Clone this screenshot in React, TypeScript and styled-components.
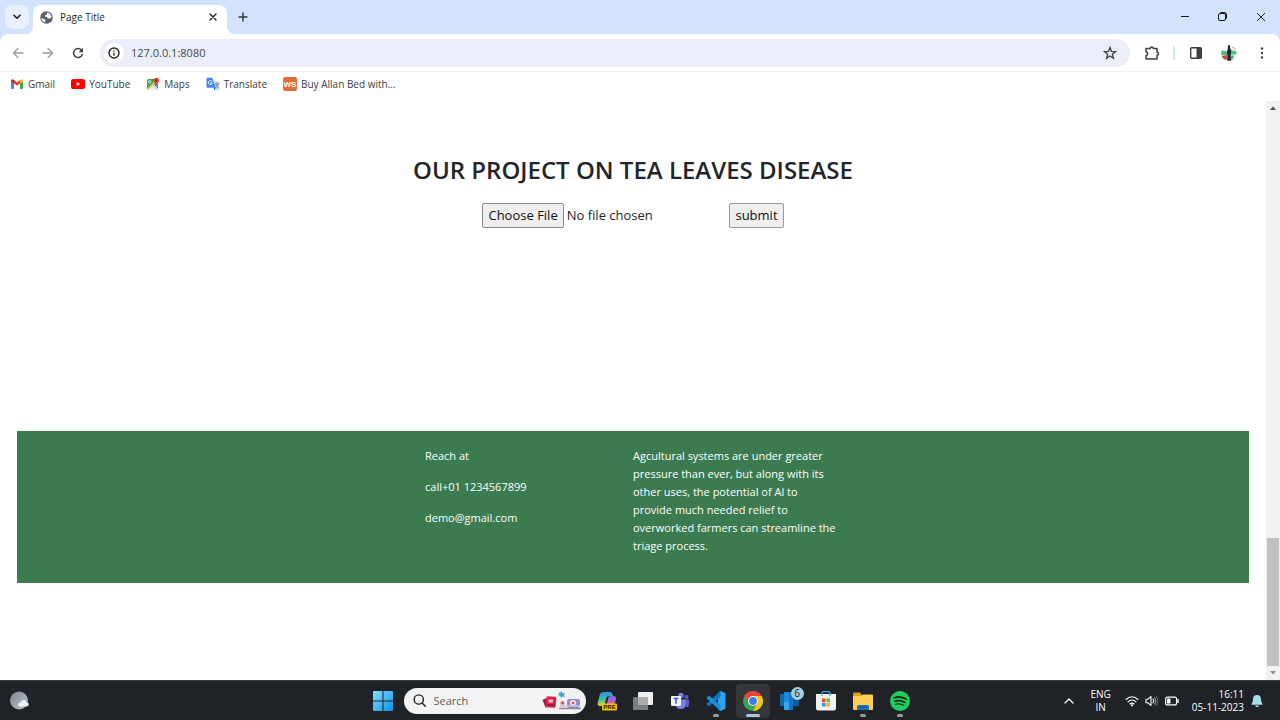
import React from 'react';
import styled, { createGlobalStyle } from 'styled-components';

const GlobalStyle = createGlobalStyle`
  *, *::before, *::after { box-sizing: border-box; }
  body { margin: 0; background: #ffffff; font-family: 'Open Sans', 'Noto Sans', sans-serif; }
  button, input { font-family: inherit; }
  svg { display: block; flex: none; }
`;

const Desktop = styled.div`
  min-height: 100vh;
  display: flex;
  flex-direction: column;
`;

/* ---------- browser frame ---------- */

const IconButton = styled.button<{ $size?: number; $bg?: string; $radius?: number }>`
  width: ${(p) => p.$size ?? 24}px;
  height: ${(p) => p.$size ?? 24}px;
  border: 0;
  padding: 0;
  display: flex;
  align-items: center;
  justify-content: center;
  flex: none;
  background: ${(p) => p.$bg ?? 'transparent'};
  border-radius: ${(p) => p.$radius ?? 12}px;
`;

const TabStrip = styled.header`
  display: flex;
  align-items: flex-end;
  height: 34px;
  padding: 0 7px 0 5px;
  background: #d3e2fd;
`;

const StripCell = styled.div`
  display: flex;
  align-items: center;
  height: 34px;
`;

const Tab = styled.div`
  position: relative;
  display: flex;
  align-items: center;
  width: 194px;
  height: 29px;
  margin: 0 4px;
  padding: 0 2px 5px 7px;
  gap: 7px;
  background: #ffffff;
  border-radius: 8px 8px 0 0;
  font-size: 10px;
  color: #1f1f1f;

  &::before,
  &::after {
    content: '';
    position: absolute;
    bottom: 0;
    width: 8px;
    height: 8px;
  }
  &::before {
    right: 100%;
    background: radial-gradient(circle at 0 0, transparent 8px, #ffffff 8px);
  }
  &::after {
    left: 100%;
    background: radial-gradient(circle at 100% 0, transparent 8px, #ffffff 8px);
  }
`;

const TabTitle = styled.span`
  flex: 1;
`;

const WindowControls = styled.div`
  display: flex;
  align-items: center;
  height: 34px;
  gap: 14px;
  margin-left: auto;
`;

const ToolbarBack = styled.div`
  background: #d3e2fd;
`;

const Toolbar = styled.div`
  display: flex;
  align-items: center;
  height: 38px;
  padding: 0 6px;
  background: #ffffff;
  border-bottom: 1px solid #eef0f4;
  border-radius: 8px 8px 0 0;
`;

const NavButtons = styled.div`
  display: flex;
  gap: 6px;
  margin-right: 10px;
`;

const AddressBar = styled.div`
  display: flex;
  align-items: center;
  flex: 1;
  height: 28px;
  padding: 0 8px 0 4px;
  background: #ebeef8;
  border-radius: 14px;
`;

const AddressInput = styled.input`
  flex: 1;
  min-width: 0;
  margin-left: 7px;
  border: 0;
  padding: 0;
  outline: 0;
  background: transparent;
  color: #45474b;
  font-size: 11px;
`;

const ToolbarEnd = styled.div`
  display: flex;
  align-items: center;
  margin-left: 10px;
`;

const Divider = styled.span`
  width: 2px;
  height: 14px;
  margin: 0 9px;
  background: #d3e2fd;
`;

const EndButtons = styled.div`
  display: flex;
  gap: 9px;
`;

const Bookmarks = styled.nav`
  display: flex;
  align-items: center;
  height: 29px;
  padding: 0 10px 5px;
  gap: 16px;
  background: #ffffff;
`;

const Bookmark = styled.a`
  display: flex;
  align-items: center;
  gap: 4px;
  color: #3a3c40;
  font-size: 10px;
  line-height: 16px;
  text-decoration: none;
  white-space: nowrap;
`;

/* ---------- web page ---------- */

const Viewport = styled.div`
  flex: 1;
  display: flex;
`;

const Page = styled.main`
  flex: 1;
  padding: 52px 17px 96px;
  color: #212529;
`;

const Title = styled.h1`
  margin: 0 0 16px;
  font-size: 24px;
  font-weight: 600;
  line-height: 34px;
  text-align: center;
`;

const UploadForm = styled.form`
  display: flex;
  justify-content: center;
  margin-bottom: 203px;
`;

const FileInput = styled.input`
  width: 247px;
  height: 25px;
  font-size: 13px;
  line-height: 23px;
  color: #212529;

  &::file-selector-button {
    height: 25px;
    margin: 0 3px 0 0;
    padding: 0 5px;
    font: inherit;
    color: #111111;
    background: #efefef;
    border: 1px solid #8a8a8a;
    border-radius: 2px;
  }
`;

const SubmitButton = styled.button`
  height: 25px;
  padding: 0 5px;
  font-size: 13px;
  line-height: 23px;
  color: #111111;
  background: #efefef;
  border: 1px solid #9a9a9a;
  border-radius: 2px;
`;

const Footer = styled.footer`
  display: flex;
  justify-content: center;
  min-height: 152px;
  padding: 16px 0 14px;
  background: #3c7a50;
  color: #ffffff;
  font-size: 11px;
  line-height: 18px;
`;

const FooterColumn = styled.div`
  width: 208px;
  padding-right: 3px;

  p {
    margin: 0 0 13px;
  }
`;

const ScrollTrack = styled.div`
  display: flex;
  flex-direction: column;
  align-items: center;
  width: 14px;
  padding: 5px 0;
  background: #f1f1f1;
`;

const ScrollThumb = styled.div`
  width: 12px;
  height: 128px;
  margin: auto 0 4px;
  background: #c1c1c1;
`;

/* ---------- taskbar ---------- */

const Taskbar = styled.footer`
  display: grid;
  grid-template-columns: 1fr auto 1fr;
  align-items: center;
  height: 40px;
  padding: 0 7px 0 9px;
  background: #1f2226;
  border-top: 1px solid #3a3d40;
  color: #ffffff;
`;

const TaskCenter = styled.div`
  display: flex;
  align-items: center;
  gap: 4px;
`;

const SearchBox = styled.label`
  display: flex;
  align-items: center;
  width: 182px;
  height: 26px;
  padding: 0 4px 0 9px;
  gap: 8px;
  background: #f3f3f3;
  border-radius: 13px;
`;

const SearchInput = styled.input`
  flex: 1;
  min-width: 0;
  border: 0;
  padding: 0;
  outline: 0;
  background: transparent;
  font-size: 11px;

  &::placeholder {
    color: #5c5c5c;
  }
`;

const AppRow = styled.div`
  display: flex;
  justify-content: space-between;
  width: 327px;
`;

const AppButton = styled.button<{ $active?: boolean; $running?: boolean }>`
  position: relative;
  display: flex;
  align-items: center;
  justify-content: center;
  width: 34px;
  height: 34px;
  padding: 0;
  border: 0;
  border-radius: 4px;
  background: ${(p) => (p.$active ? '#34373a' : 'transparent')};

  &::after {
    content: '';
    display: ${(p) => (p.$active || p.$running ? 'block' : 'none')};
    position: absolute;
    bottom: 1px;
    left: 50%;
    width: ${(p) => (p.$active ? 14 : 6)}px;
    height: 3px;
    border-radius: 2px;
    transform: translateX(-50%);
    background: ${(p) => (p.$active ? '#a3cbdc' : '#9a9c9e')};
  }
`;

const Badge = styled.span`
  position: absolute;
  top: 3px;
  right: 3px;
  width: 13px;
  height: 13px;
  border-radius: 50%;
  background: #a4cfe2;
  color: #16232b;
  font-size: 10px;
  line-height: 13px;
  text-align: center;
`;

const Tray = styled.div`
  display: flex;
  align-items: center;
  justify-content: flex-end;
  padding-right: 10px;
  font-size: 10px;
  line-height: 13px;
`;

const Language = styled.div`
  margin: 0 14px 0 16px;
  text-align: center;
`;

const TrayIcons = styled.div`
  display: flex;
  align-items: center;
  gap: 6px;
`;

const Clock = styled.div`
  margin: 0 7px 0 13px;
  text-align: right;
`;

/* ---------- icons ---------- */

const line = { fill: 'none', strokeLinecap: 'round' as const, strokeLinejoin: 'round' as const };

const GlobeIcon = () => (
  <svg width="13" height="13" viewBox="0 0 13 13">
    <circle cx="6.5" cy="6.5" r="6.2" fill="#5b6066" />
    <path d="M1.4 7.2 4.8 8.2 5.6 9.6 4.6 11.4C2.8 10.6 1.5 9 1.4 7.2Z" fill="#fff" />
    <path d="M7.2 1.4C9.6 1.8 11.4 3.8 11.6 6.2L9.8 7.6 7.6 7.4 7.2 6 4.8 5.6 5.2 4.2 6.8 3.8Z" fill="#fff" />
  </svg>
);

const GmailIcon = () => (
  <svg width="14" height="14" viewBox="0 0 14 14">
    <path d="M1 4v7.2q0 .8.8.8H4V6.2Z" fill="#4285f4" />
    <path d="M13 4v7.2q0 .8-.8.8H10V6.2Z" fill="#34a853" />
    <path d="M10 6.4V3.2l.7-.6Q12.900 1.600 13 4v.4Z" fill="#fbbc04" />
    <path d="M4 6.400V3L7 5.300 10 3v3.400L7 8.700Z" fill="#ea4335" />
    <path d="M1 4.400V4q.1-2.400 2.300-1.400L4 3.200v3.200Z" fill="#c5221f" />
  </svg>
);

const YouTubeIcon = () => (
  <svg width="14" height="14" viewBox="0 0 14 14">
    <rect x="0" y="2" width="14" height="10" rx="2.600" fill="#f00" />
    <path d="M5.600 4.900v4.200L9.300 7Z" fill="#fff" />
  </svg>
);

const MapsIcon = () => (
  <svg width="14" height="14" viewBox="0 0 14 14">
    <rect x="1" y="2" width="11" height="11" rx="1.500" fill="#34a853" />
    <path d="M2 13 7 8l5 5Z" fill="#e8eaed" />
    <path d="M12 6v6L8 8l2-2Z" fill="#4285f4" />
    <path d="m7.500 7.500 4.500 4.500" stroke="#fff" strokeWidth=".9" />
    <path d="M1.500 12.500 8.500 5.500" stroke="#fbd34b" strokeWidth="1.600" />
    <circle cx="3.700" cy="4.800" r="1.200" fill="none" stroke="#fff" strokeWidth=".8" />
    <path d="M10.300 9C10 6.800 7.600 6 7.600 3.500a2.700 2.700 0 0 1 5.400 0C13 6 10.600 6.800 10.300 9Z" fill="#ea4335" />
    <circle cx="10.300" cy="3.500" r="1" fill="#8c1a11" />
  </svg>
);

const TranslateIcon = () => (
  <svg width="14" height="14" viewBox="0 0 14 14">
    <path d="M5 4h7.500q1 0 1 1v7.500q0 1-1 1H8.500Z" fill="#dadce0" />
    <path d="M7.500 10.500h2L8.500 13.500Z" fill="#174ea6" />
    <path d="M1.500.8h4.800L9.500 10.800h-8q-1 0-1-1v-8q0-1 1-1Z" fill="#4285f4" />
    <path d="M5.900 4.300A2 2 0 1 0 6.300 6H4.600" {...line} stroke="#fff" strokeWidth=".9" />
    <path d="M9 7h3.600M10.800 6.200V7M12 7c-.3 1.700-1.400 3-2.600 3.800M9.800 8.300c.6 1.200 1.500 2 2.600 2.500" {...line} stroke="#5f6f8a" strokeWidth=".8" />
  </svg>
);

const WsIcon = () => (
  <svg width="14" height="14" viewBox="0 0 14 14">
    <rect width="14" height="14" rx="2" fill="#e26b3a" />
    <text x="7" y="10" fontSize="8" fontWeight="700" fill="#fff" textAnchor="middle" fontFamily="Liberation Sans, sans-serif">WS</text>
  </svg>
);

const AvatarIcon = () => (
  <svg width="18" height="18" viewBox="0 0 18 18">
    <circle cx="9" cy="9" r="8" fill="#f3f5f4" />
    <path d="M1.500 6.500 6 7l1 4H1.200ZM11 6.500l5 .5.500 3.500H10Z" fill="#3fc66a" />
    <path d="M1.500 12 7 11v4.500L4 15.500Z" fill="#bc4a3e" />
    <path d="M11 11.500h3L13 15l-2 1Z" fill="#4fae63" />
    <path d="M12 3q3 .5 4 3" fill="none" stroke="#e2a49b" />
    <path d="M8 1.200h2v3l1.200 2-.5 4.500.3 6H7.200l.3-5.500L6.500 9l1.300-4Z" fill="#152536" />
  </svg>
);

const StartIcon = () => (
  <svg width="20" height="20" viewBox="0 0 20 20">
    <defs>
      <linearGradient id="start" x1="0" y1="0" x2="1" y2="1">
        <stop offset="0" stopColor="#7fe3fc" />
        <stop offset="1" stopColor="#0c8ee8" />
      </linearGradient>
    </defs>
    <path d="M1 0h8.500v9.500H0V1q0-1 1-1Zm9.500 0H19q1 0 1 1v8.500h-9.500ZM0 10.500h9.500V20H1q-1 0-1-1Zm10.500 0H20V19q0 1-1 1h-8.500Z" fill="url(#start)" />
  </svg>
);

const SearchArt = () => (
  <svg width="40" height="20" viewBox="0 0 40 20">
    <path d="m.5 9 4-2 2 9-3 .5Z" fill="#a31745" />
    <rect x="4" y="5.500" width="10" height="11" rx="1.500" transform="rotate(5 9 11)" fill="#d9264f" />
    <path d="M6.500 8.500h4.500v3H6.500Z" fill="#f8b7c4" />
    <path d="M5 14h8" stroke="#8d1739" strokeWidth="1.500" />
    <path d="m16 1 2 1 1.500-2 1 2.200L23 2l-1.200 2L23 6l-2.500-.5L19 7l-.8-2.400L16 4.500l1.200-1.700Z" fill="#36a9c9" />
    <path d="M18 11q0-2 2.500-2t2.500 2v5h-5Z" fill="#f3c8cf" />
    <circle cx="20.500" cy="12" r="1.500" fill="#d84557" />
    <rect x="25" y="8" width="13" height="9" rx="2" fill="#8b8fd0" />
    <circle cx="31" cy="12" r="3" fill="#f6dfe5" />
    <circle cx="31" cy="12" r="1.300" fill="#d84557" />
    <path d="M17 17.500h22" stroke="#8f8298" strokeWidth="1.500" />
    <path d="M18 15h20" stroke="#c7c3e5" strokeWidth="1.500" />
  </svg>
);

const CopilotIcon = () => (
  <svg width="20" height="20" viewBox="0 0 20 20">
    <defs>
      <linearGradient id="copilotLeft" x1="0" y1="0" x2="0" y2="1">
        <stop offset="0" stopColor="#2e8be8" />
        <stop offset=".5" stopColor="#39bfa0" />
        <stop offset="1" stopColor="#e8cf3a" />
      </linearGradient>
      <linearGradient id="copilotRight" x1="0" y1="0" x2="0" y2="1">
        <stop offset="0" stopColor="#6b6fe8" />
        <stop offset=".6" stopColor="#d35fc4" />
        <stop offset="1" stopColor="#f07a5c" />
      </linearGradient>
    </defs>
    <path d="M6 1h7q2 0 2.500 2l.5 2h-4q-2 0-2.500 2L8 13q-.5 2-2.500 2H3q-3 0-2.200-3.500l2-8Q3.500 1 6 1Z" fill="url(#copilotLeft)" />
    <path d="M13 5h3.500q3 0 2.500 3l-1.500 6q-.5 2-3 2H8l1-1 2.200-8Q11.500 5 13 5Z" fill="url(#copilotRight)" />
    <path d="M9.500 6.500h2L9.500 13H8Z" fill="#1f2226" />
    <rect x="5" y="12.500" width="15" height="7" rx="1" fill="#f3bd12" />
    <text x="12.500" y="18.300" fontSize="6" fontWeight="700" fill="#2b2200" textAnchor="middle" fontFamily="Liberation Sans, sans-serif">PRE</text>
  </svg>
);

const TaskViewIcon = () => (
  <svg width="20" height="20" viewBox="0 0 20 20">
    <rect x="5" y="1" width="15" height="13" rx="1" fill="#efefef" />
    <rect x="0" y="6" width="15" height="13" rx="1" fill="#7b7d7f" />
    <path d="M5 6h9q1 0 1 1v7H5Z" fill="#acaeaf" />
  </svg>
);

const TeamsIcon = () => (
  <svg width="18" height="18" viewBox="0 0 18 18">
    <circle cx="15.500" cy="5" r="2" fill="#5b61c4" />
    <path d="M12 7.500h6v5q0 2.500-3 2.800Z" fill="#5b61c4" />
    <circle cx="10" cy="3.500" r="2.700" fill="#7b81e2" />
    <path d="M5 7.500h9.500V13q0 4-4.700 4T5 13Z" fill="#7b81e2" />
    <rect x="0" y="4" width="10" height="10" rx="1" fill="#eef0fb" />
    <path d="M2.500 6.500h5M5 6.500v5.200" stroke="#4b53bc" strokeWidth="1.500" />
  </svg>
);

const VsCodeIcon = () => (
  <svg width="20" height="20" viewBox="0 0 20 20">
    <path d="m14.500 0 5 2.300v15.400l-5 2.300-2.500-1.800V2Z" fill="#2ba5ee" />
    <path d="M14.500 0 1 12.300q-.7.700 0 1.400l1.200 1.200q.6.500 1.300 0L14.500 6Z" fill="#0a78be" />
    <path d="M14.500 20 1 7.700Q.3 7 1 6.300l1.200-1.200q.6-.5 1.300 0L14.500 14Z" fill="#1490d8" />
  </svg>
);

const ChromeIcon = () => (
  <svg width="20" height="20" viewBox="0 0 20 20">
    <circle cx="10" cy="10" r="10" fill="#34a853" />
    <path d="M1.340 5A10 10 0 0 1 18.660 5H10a5 5 0 0 0-4.330 7.500Z" fill="#ea4335" />
    <path d="M18.660 5A10 10 0 0 1 10 20l4.330-7.500A5 5 0 0 0 10 5Z" fill="#fbc116" />
    <circle cx="10" cy="10" r="5" fill="#fff" />
    <circle cx="10" cy="10" r="3.900" fill="#3b7ded" />
  </svg>
);

const PhoneLinkIcon = () => (
  <svg width="20" height="20" viewBox="0 0 20 20">
    <path d="M0 3h9v12H0Z" fill="#1169ae" />
    <path d="M9 6h10v9H9Z" fill="#115b96" />
    <path d="M4 1h9v13H4Z" fill="#1b8bdb" />
    <path d="M4 11h9v8H4Z" fill="#35a9ef" />
    <path d="M9 1h4v18H9Z" fill="#1476c2" />
  </svg>
);

const StoreIcon = () => (
  <svg width="20" height="20" viewBox="0 0 20 20">
    <path d="M6 5V2q0-1.500 1.500-1.500h5Q14 .5 14 2v3" fill="none" stroke="#3ba3dc" strokeWidth="1.300" />
    <path d="M0 3h20v14q0 2.500-2.500 2.500h-15Q0 19.500 0 17Z" fill="#f2f2f2" />
    <path d="M6 2.500V5M14 2.500V5" stroke="#3ba3dc" strokeWidth="1.300" />
    <path d="M6 7.500h3.600v3.600H6Z" fill="#e8512b" />
    <path d="M10.400 7.500H14v3.600h-3.600Z" fill="#7bb52d" />
    <path d="M6 11.900h3.600v3.600H6Z" fill="#2e9bdc" />
    <path d="M10.400 11.900H14v3.600h-3.600Z" fill="#f0b420" />
  </svg>
);

const ExplorerIcon = () => (
  <svg width="20" height="20" viewBox="0 0 20 20">
    <path d="M1 1.500h6L9 4h10q1 0 1 1v5H0V2.500q0-1 1-1Z" fill="#dd9c1c" />
    <path d="M0 5h8l2-1.500h9q1 0 1 1V18q0 1-1 1H1q-1 0-1-1Z" fill="#fbcf56" />
    <path d="M4 19v-3.500Q4 14 5.500 14h9q1.500 0 1.500 1.500V19Z" fill="#1873bd" />
    <path d="M6.500 16.500h7" stroke="#0b4f8d" strokeWidth="1.200" />
  </svg>
);

const SpotifyIcon = () => (
  <svg width="20" height="20" viewBox="0 0 20 20">
    <circle cx="10" cy="10" r="10" fill="#1fce5c" />
    <g {...line} stroke="#15301f">
      <path d="M4 6.800c4-1.200 8.500-.8 12 1.200" strokeWidth="1.900" />
      <path d="M4.600 10.200c3.500-1 7.200-.6 10.200 1.100" strokeWidth="1.600" />
      <path d="M5.200 13.300c2.900-.8 5.800-.5 8.400 1" strokeWidth="1.300" />
    </g>
  </svg>
);

const WeatherIcon = () => (
  <svg width="20" height="20" viewBox="0 0 20 20">
    <defs>
      <linearGradient id="moon" x1="0" y1="0" x2="1" y2="1">
        <stop offset="0" stopColor="#7d868f" />
        <stop offset="1" stopColor="#bcc4ca" />
      </linearGradient>
    </defs>
    <circle cx="10" cy="9.500" r="9" fill="url(#moon)" />
    <path d="M12 15.500q-3 0-3-2t2.500-2q1-3 3.800-2.500 2 .3 2.300 2.300 2.400.3 2.200 2.200-.2 2-2.300 2Z" fill="#eef2f5" />
  </svg>
);

const bookmarks = [
  { label: 'Gmail', icon: <GmailIcon /> },
  { label: 'YouTube', icon: <YouTubeIcon /> },
  { label: 'Maps', icon: <MapsIcon /> },
  { label: 'Translate', icon: <TranslateIcon /> },
  { label: 'Buy Allan Bed with...', icon: <WsIcon /> },
];

const apps = [
  { label: 'Copilot', icon: <CopilotIcon /> },
  { label: 'Task view', icon: <TaskViewIcon /> },
  { label: 'Teams', icon: <TeamsIcon /> },
  { label: 'Visual Studio Code', icon: <VsCodeIcon />, running: true },
  { label: 'Google Chrome', icon: <ChromeIcon />, active: true },
  { label: 'Phone Link', icon: <PhoneLinkIcon />, badge: 6 },
  { label: 'Store', icon: <StoreIcon /> },
  { label: 'File Explorer', icon: <ExplorerIcon />, running: true },
  { label: 'Spotify', icon: <SpotifyIcon />, running: true },
];

export default function App() {
  return (
    <Desktop>
      <GlobalStyle />
      <TabStrip>
        <StripCell>
          <IconButton aria-label="Search tabs" $bg="#e8f0fe" $radius={8}>
            <svg width="8" height="6" viewBox="0 0 8 6"><path d="m1 1.200 3 3 3-3" {...line} stroke="#1f1f1f" strokeWidth="1.600" /></svg>
          </IconButton>
        </StripCell>
        <Tab>
          <GlobeIcon />
          <TabTitle>Page Title</TabTitle>
          <IconButton aria-label="Close tab">
            <svg width="8" height="8" viewBox="0 0 8 8"><path d="m1 1 6 6M7 1 1 7" {...line} stroke="#1f1f1f" strokeWidth="1.400" /></svg>
          </IconButton>
        </Tab>
        <StripCell>
          <IconButton aria-label="New tab">
            <svg width="10" height="10" viewBox="0 0 10 10"><path d="M5 1v8M1 5h8" {...line} stroke="#33363a" strokeWidth="1.400" /></svg>
          </IconButton>
        </StripCell>
        <WindowControls>
          <IconButton aria-label="Minimize">
            <svg width="10" height="10" viewBox="0 0 10 10"><path d="M1 4.500h8" stroke="#111" strokeWidth="1" /></svg>
          </IconButton>
          <IconButton aria-label="Restore">
            <svg width="10" height="10" viewBox="0 0 10 10">
              <rect x=".5" y="1.500" width="7" height="7" rx="1.500" fill="none" stroke="#111" />
              <path d="M2.500.5H6.500q2 0 2 2V6.500" fill="none" stroke="#111" />
            </svg>
          </IconButton>
          <IconButton aria-label="Close">
            <svg width="10" height="10" viewBox="0 0 10 10"><path d="m1 1 8 8M9 1 1 9" stroke="#222" strokeWidth="1" /></svg>
          </IconButton>
        </WindowControls>
      </TabStrip>

      <ToolbarBack>
        <Toolbar>
          <NavButtons>
            <IconButton aria-label="Back">
              <svg width="12" height="12" viewBox="0 0 12 12"><path d="M11 6H1.500M6 1.500 1.500 6 6 10.500" {...line} stroke="#9a9c9f" strokeWidth="1.300" /></svg>
            </IconButton>
            <IconButton aria-label="Forward">
              <svg width="12" height="12" viewBox="0 0 12 12"><path d="M1 6h9.500M6 1.500 10.500 6 6 10.500" {...line} stroke="#9a9c9f" strokeWidth="1.300" /></svg>
            </IconButton>
            <IconButton aria-label="Reload">
              <svg width="12" height="12" viewBox="0 0 12 12">
                <path d="M10.300 7.500A4.500 4.500 0 1 1 9.500 3.100" {...line} stroke="#3c3f43" strokeWidth="1.500" />
                <path d="M11 .8v4.400H6.600Z" fill="#3c3f43" />
              </svg>
            </IconButton>
          </NavButtons>
          <AddressBar>
            <IconButton aria-label="View site information" $size={20} $bg="#ffffff">
              <svg width="12" height="12" viewBox="0 0 12 12">
                <circle cx="6" cy="6" r="5" fill="none" stroke="#222" strokeWidth="1.400" />
                <path d="M6 5.500v3.200M6 3.200v1.200" stroke="#222" strokeWidth="1.300" />
              </svg>
            </IconButton>
            <AddressInput aria-label="Address" defaultValue="127.0.0.1:8080" />
            <IconButton aria-label="Bookmark this page">
              <svg width="14" height="14" viewBox="0 0 14 14">
                <path d="m7 1.500 1.500 3.800 4 .3-3.100 2.600 1 4L7 10l-3.400 2.200 1-4L1.500 5.600l4-.3Z" fill="none" stroke="#3c3f43" strokeWidth="1.300" />
              </svg>
            </IconButton>
          </AddressBar>
          <ToolbarEnd>
            <IconButton aria-label="Extensions">
              <svg width="16" height="16" viewBox="0 0 16 16">
                <path d="M2 3.500h4.200a1.500 1.500 0 0 1 3 0H13v3.700a1.500 1.500 0 0 1 0 3V14H2v-3.600a1.700 1.700 0 0 0 0-3.400Z" {...line} stroke="#3c3f43" strokeWidth="1.500" />
              </svg>
            </IconButton>
            <Divider />
            <EndButtons>
              <IconButton aria-label="Side panel">
                <svg width="12" height="12" viewBox="0 0 12 12">
                  <rect x=".7" y=".7" width="10.600" height="10.600" rx="1" fill="none" stroke="#3c3f43" strokeWidth="1.400" />
                  <path d="M6.500 1h5v10h-5Z" fill="#3c3f43" />
                </svg>
              </IconButton>
              <IconButton aria-label="Profile"><AvatarIcon /></IconButton>
              <IconButton aria-label="Menu">
                <svg width="4" height="12" viewBox="0 0 4 12">
                  <g fill="#3c3f43"><circle cx="2" cy="1.500" r="1.200" /><circle cx="2" cy="6" r="1.200" /><circle cx="2" cy="10.500" r="1.200" /></g>
                </svg>
              </IconButton>
            </EndButtons>
          </ToolbarEnd>
        </Toolbar>
      </ToolbarBack>

      <Bookmarks aria-label="Bookmarks">
        {bookmarks.map((b) => (
          <Bookmark key={b.label} href="#">{b.icon}{b.label}</Bookmark>
        ))}
      </Bookmarks>

      <Viewport>
        <Page>
          <Title>OUR PROJECT ON TEA LEAVES DISEASE</Title>
          <UploadForm onSubmit={(e) => e.preventDefault()}>
            <FileInput type="file" aria-label="Leaf image" />
            <SubmitButton type="submit">submit</SubmitButton>
          </UploadForm>
          <Footer>
            <FooterColumn>
              <p>Reach at</p>
              <p>call+01 1234567899</p>
              <p>demo@gmail.com</p>
            </FooterColumn>
            <FooterColumn>
              <p>
                Agcultural systems are under greater pressure than ever, but along with its other uses, the
                potential of Al to provide much needed relief to overworked farmers can streamline the triage
                process.
              </p>
            </FooterColumn>
          </Footer>
        </Page>
        <ScrollTrack>
          <svg width="8" height="5" viewBox="0 0 8 5"><path d="M4 .5 7 4H1Z" fill="#505050" /></svg>
          <ScrollThumb />
          <svg width="8" height="5" viewBox="0 0 8 5"><path d="M4 4.500 7 1H1Z" fill="#8e8e8e" /></svg>
        </ScrollTrack>
      </Viewport>

      <Taskbar>
        <div><WeatherIcon /></div>
        <TaskCenter>
          <AppButton aria-label="Start"><StartIcon /></AppButton>
          <SearchBox>
            <svg width="13" height="13" viewBox="0 0 13 13">
              <circle cx="5.800" cy="5.500" r="4.600" fill="none" stroke="#222" strokeWidth="1.400" />
              <path d="m9.200 9 3 3.200" {...line} stroke="#222" strokeWidth="1.500" />
            </svg>
            <SearchInput type="text" placeholder="Search" aria-label="Search" />
            <SearchArt />
          </SearchBox>
          <AppRow>
            {apps.map((a) => (
              <AppButton key={a.label} aria-label={a.label} $active={a.active} $running={a.running}>
                {a.icon}
                {a.badge && <Badge>{a.badge}</Badge>}
              </AppButton>
            ))}
          </AppRow>
        </TaskCenter>
        <Tray>
          <svg width="10" height="6" viewBox="0 0 10 6"><path d="m1 5 4-4 4 4" {...line} stroke="#fff" strokeWidth="1.200" /></svg>
          <Language>ENG<br />IN</Language>
          <TrayIcons>
            <svg width="14" height="12" viewBox="0 0 14 12">
              <g {...line} stroke="#fff" strokeWidth="1.100">
                <path d="M1 4.500q6-5.500 12 0" />
                <path d="M3 6.800q4-3.600 8 0" />
                <path d="M5 9q2-1.800 4 0" />
              </g>
              <circle cx="7" cy="10.300" r="1.100" fill="#fff" />
            </svg>
            <svg width="14" height="12" viewBox="0 0 14 12">
              <path d="M1 4.200h2L6 1.500v9L3 7.800H1Z" {...line} stroke="#fff" strokeWidth="1.100" />
              <path d="M8 4q1.500 2 0 4" {...line} stroke="#fff" strokeWidth="1.100" />
              <path d="M9.800 2.500q2.600 3.500 0 7" {...line} stroke="#aaa" strokeWidth="1" />
              <path d="M11.500 1.200q3 4.800 0 9.600" {...line} stroke="#666" strokeWidth="1" />
            </svg>
            <svg width="14" height="12" viewBox="0 0 14 12">
              <rect x=".6" y="2.100" width="11" height="7.800" rx="2" fill="none" stroke="#fff" strokeWidth="1.100" />
              <rect x="2" y="3.500" width="3.500" height="5" rx=".6" fill="#fff" />
              <path d="M13 4.500v3" {...line} stroke="#fff" strokeWidth="1.400" />
            </svg>
          </TrayIcons>
          <Clock>16:11<br />05-11-2023</Clock>
          <svg width="12" height="14" viewBox="0 0 12 14">
            <path d="M6 1q4 0 4 4.300 0 2.500 1.500 4.700v.8H.5V10Q2 7.800 2 5.300 2 1 6 1Z" fill="#a9dcee" />
            <path d="M4 11.500h4q-.5 1.800-2 1.800t-2-1.800Z" fill="#a9dcee" />
          </svg>
        </Tray>
      </Taskbar>
    </Desktop>
  );
}
